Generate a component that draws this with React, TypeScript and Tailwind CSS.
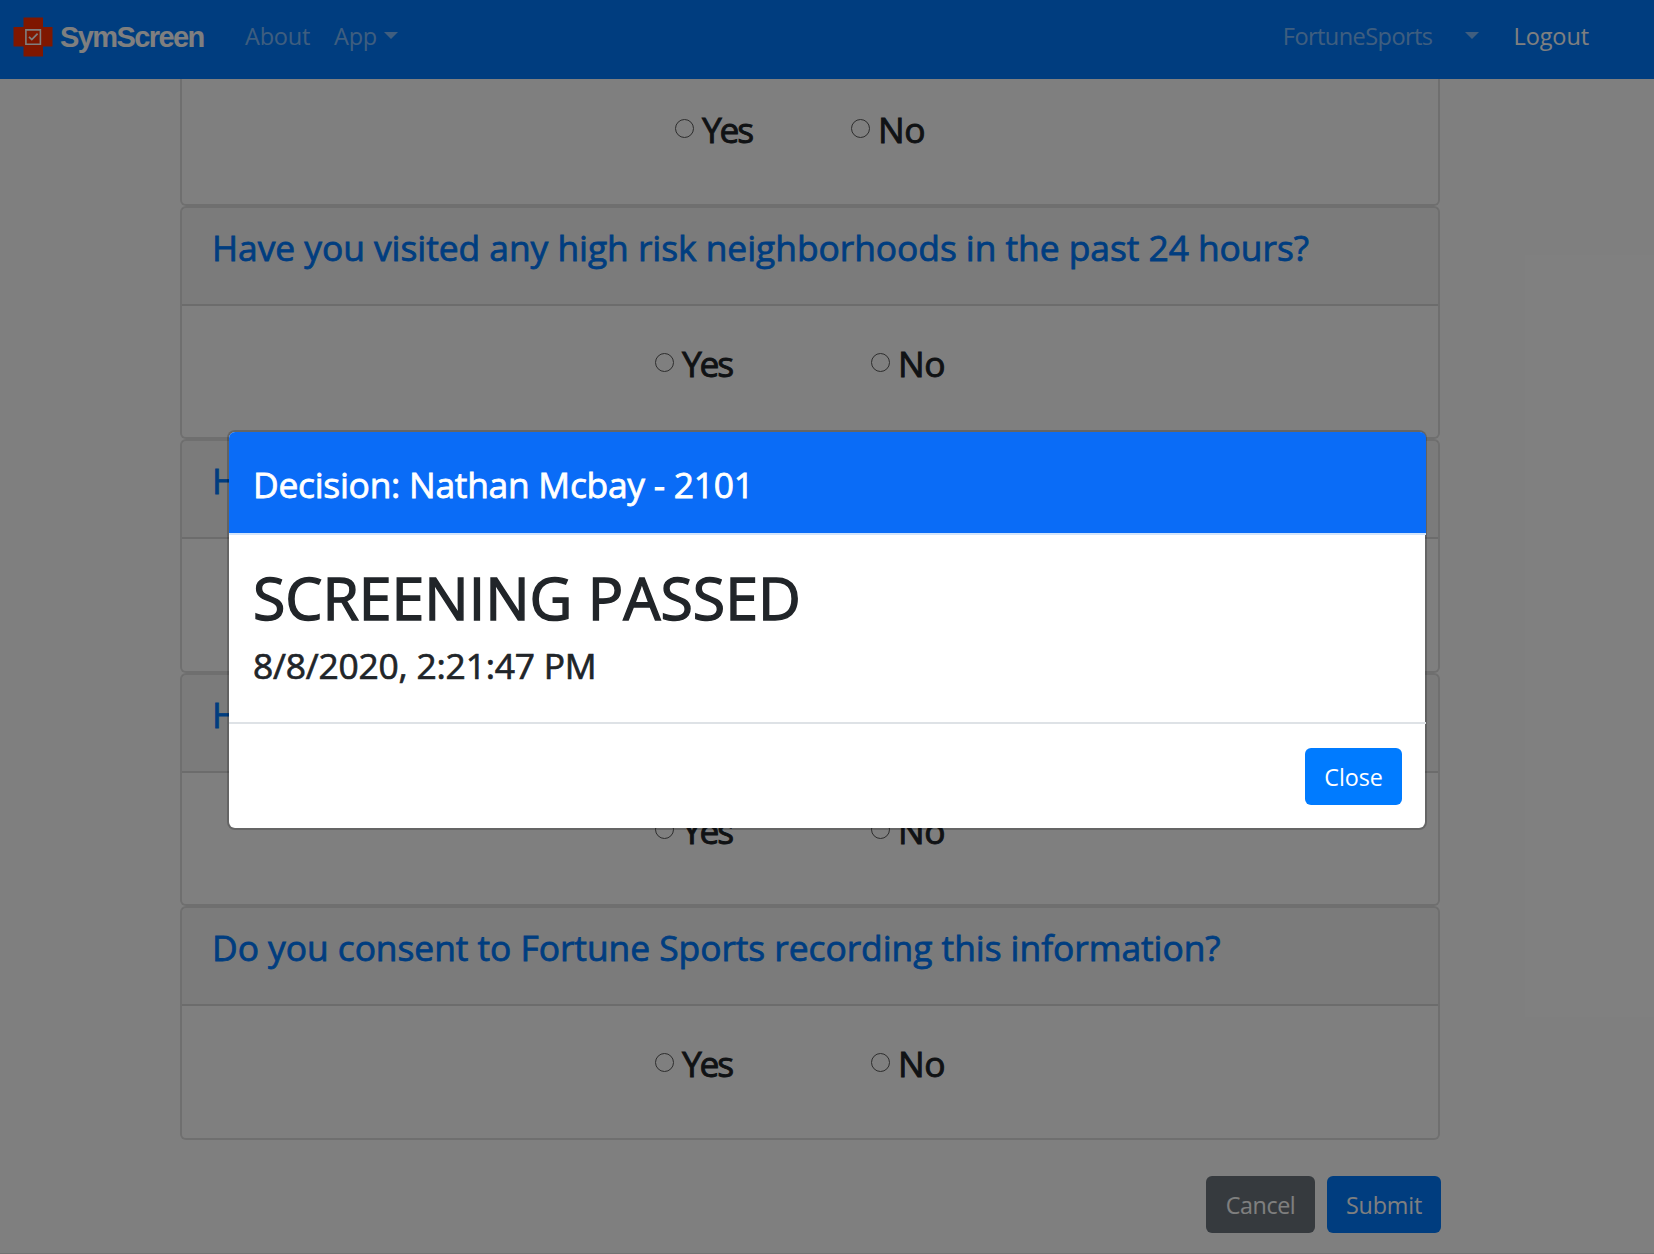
import React from 'react';

function Caret({ className = '' }: { className?: string }) {
  return (
    <svg viewBox="0 0 14 7" className={`h-[7px] w-[14px] fill-current ${className}`}>
      <path d="M0 0H14L7 7Z" />
    </svg>
  );
}

function Logo() {
  return (
    <svg viewBox="0 0 40 40" className="mt-px size-10">
      <path d="M10.5 0.5H30V10H39.5V29.5H30V39.5H10.5V29.5H0.5V10H10.5Z" fill="#ff2e00" />
      <path d="M12.9 12.9H27.4V27.2H12.9Z" fill="none" stroke="#fff" strokeWidth="1.6" />
      <path d="M16 19.8L18.8 22.6L24.6 16.6" fill="none" stroke="#fff" strokeWidth="1.7" />
    </svg>
  );
}

function Option({ label, className = '', textClass = '' }: { label: string; className?: string; textClass?: string }) {
  return (
    <label className={`flex items-start ${className}`}>
      <span className="mt-3 size-[19px] shrink-0 rounded-full border border-[#5a5a5a] bg-white" />
      <span
        className={`mt-px ml-2 text-[35.4px] leading-[43px] text-[#212529] [-webkit-text-stroke:0.9px_#212529] ${textClass}`}
      >
        {label}
      </span>
    </label>
  );
}

function Answers({ yesWidth }: { yesWidth: string }) {
  return (
    <>
      <Option label="Yes" className={yesWidth} textClass="tracking-[-2.2px]" />
      <Option label="No" textClass="tracking-[-0.5px]" />
    </>
  );
}

function Question({ text, className, answers = true }: { text: string; className: string; answers?: boolean }) {
  return (
    <section className={`rounded-md border-2 border-black/[.125] bg-white ${className}`}>
      <h5 className="h-[98px] border-b-2 border-black/[.125] bg-black/[.03] pt-[18px] pl-[30px] text-[35.4px] leading-[43px] tracking-[-0.05px] whitespace-nowrap text-[#007bff] [-webkit-text-stroke:0.8px_#007bff]">
        {text}
      </h5>
      {answers && (
        <div className="flex pt-[35px] pl-[473px]">
          <Answers yesWidth="w-[216px]" />
        </div>
      )}
    </section>
  );
}

export default function App() {
  return (
    <div className="relative h-[1254px] w-[1654px] overflow-hidden bg-white font-['Open_Sans',sans-serif]">
      <nav className="flex h-[79px] items-start bg-[#007bff] pt-4 pl-[13px] text-[23.5px] leading-10 text-white/50">
        <Logo />
        <span className="mt-px ml-[7px] w-[185px] font-['Liberation_Sans',sans-serif] text-[29px] font-bold tracking-[-1.6px] text-white">
          SymScreen
        </span>
        <span className="w-[89px] tracking-[-0.2px]">About</span>
        <span className="tracking-[-0.2px]">App</span>
        <Caret className="mt-4 ml-[7px]" />
        <span className="ml-auto tracking-[-0.55px]">FortuneSports</span>
        <Caret className="mt-4 ml-8" />
        <span className="mr-[65px] ml-[35px] tracking-[-0.1px] text-white">Logout</span>
      </nav>

      <main className="ml-[180px] w-[1260px]">
        <section className="flex h-[127px] rounded-b-md border-x-2 border-b-2 border-black/[.125] pt-7 pl-[493px]">
          <Answers yesWidth="w-[176px]" />
        </section>
        <Question text="Have you visited any high risk neighborhoods in the past 24 hours?" className="h-[233px]" />
        <Question text="H" className="h-[234px]" answers={false} />
        <Question text="H" className="h-[233px]" />
        <Question text="Do you consent to Fortune Sports recording this information?" className="h-[234px]" />
        <div className="mt-9 -mr-px flex justify-end gap-3 text-[23.3px] leading-[59px] text-white">
          <button className="h-[57px] w-[109px] rounded-md bg-[#6c757d] tracking-[-0.4px]">Cancel</button>
          <button className="h-[57px] w-[114px] rounded-md bg-[#007bff] tracking-[-0.15px]">Submit</button>
        </div>
        <div className="mt-5 -mr-[214px] -ml-[180px] h-px bg-black/10" />
      </main>

      <div className="absolute inset-0 flex items-start bg-black/50">
        <div className="mt-[430px] ml-[227px] flex h-[400px] w-[1200px] flex-col rounded-lg border-2 border-black/20 bg-white bg-clip-padding">
          <div className="-mr-px h-[103px] rounded-t-md border-b-2 border-[#d3e5fb] bg-[#0a6cf7] pt-[31px] pl-6 text-[35.4px] leading-[43px] tracking-[-0.27px] text-white [-webkit-text-stroke:0.8px_#fff]">
            Decision: Nathan Mcbay - 2101
          </div>
          <div className="h-[187px] pt-[26px] pl-6 text-[#212529]">
            <h1 className="text-[59px] leading-[72px] tracking-[-0.03px] [-webkit-text-stroke:1.4px_#212529]">
              SCREENING PASSED
            </h1>
            <h5 className="mt-[11px] text-[35.4px] leading-[43px] tracking-[-0.22px] [-webkit-text-stroke:0.7px_#212529]">
              8/8/2020, 2:21:47 PM
            </h5>
          </div>
          <div className="-mr-px flex flex-1 justify-end border-t-2 border-[#dee2e6] pt-6 pr-6">
            <button className="h-[57px] w-[97px] rounded-md bg-[#007bff] text-[23.3px] leading-[59px] tracking-[-0.1px] text-white">
              Close
            </button>
          </div>
        </div>
      </div>
    </div>
  );
}
